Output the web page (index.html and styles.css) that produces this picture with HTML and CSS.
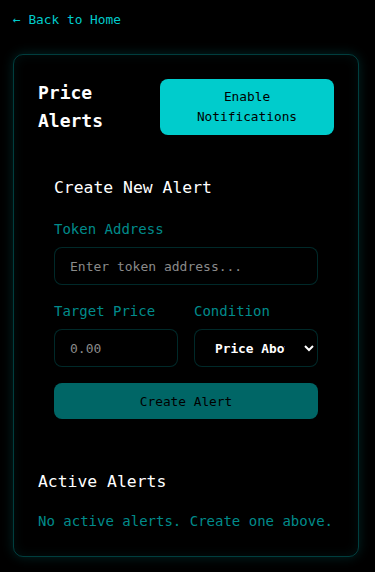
FILE: index.html
```html
<!DOCTYPE html>
<html lang="en">
<head>
<meta charset="utf-8">
<title>Price Alerts</title>
<link rel="stylesheet" href="styles.css">
</head>
<body>
<div class="page">
  <a class="back" href="#">← Back to Home</a>
  <div class="card">
    <div class="header">
      <h2 class="title">Price Alerts</h2>
      <button class="notify">Enable Notifications</button>
    </div>
    <section class="create">
      <h3 class="subtitle">Create New Alert</h3>
      <div class="group">
        <label class="label">Token Address</label>
        <input class="field" type="text" placeholder="Enter token address...">
      </div>
      <div class="row">
        <div class="group">
          <label class="label">Target Price</label>
          <input class="field" type="number" placeholder="0.00">
        </div>
        <div class="group">
          <label class="label">Condition</label>
          <select class="field select">
            <option>Price Above</option>
            <option>Price Below</option>
          </select>
        </div>
      </div>
      <button class="create-btn" disabled>Create Alert</button>
    </section>
    <h3 class="subtitle active-title">Active Alerts</h3>
    <p class="empty">No active alerts. Create one above.</p>
  </div>
</div>
</body>
</html>
```

FILE: styles.css
```css
html, body {
  margin: 0;
  padding: 0;
  background: #000;
}
body {
  font-family: "DejaVu Sans Mono", monospace;
  color: #fff;
}
.page {
  padding: 12px 16px 16px 13px;
}
.back {
  display: block;
  color: #00cccc;
  text-decoration: none;
  font-size: 12.8px;
  line-height: 16px;
  margin-bottom: 26px;
}
.card {
  border: 1px solid rgba(0, 204, 204, 0.3);
  border-radius: 10px;
  padding: 24px 24px 24px;
  box-shadow: 0 0 12px rgba(0, 204, 204, 0.18), inset 0 0 12px rgba(0, 204, 204, 0.08);
}
.header {
  display: flex;
  align-items: center;
  justify-content: space-between;
  gap: 16px;
  margin-bottom: 25px;
}
.title {
  margin: 0;
  font-size: 18px;
  line-height: 28px;
  font-weight: bold;
  flex: 1;
}
.notify {
  width: 174px;
  height: 56px;
  background: #00cccc;
  color: #000;
  border: none;
  border-radius: 8px;
  font-family: "DejaVu Sans Mono", monospace;
  font-size: 12.8px;
  line-height: 20px;
  padding: 8px 16px;
}
.create {
  padding: 16px;
}
.subtitle {
  margin: 0 0 19px;
  font-size: 16.4px;
  line-height: 24px;
  font-weight: normal;
}
.group {
  display: flex;
  flex-direction: column;
  margin-bottom: 16px;
}
.label {
  color: #008b8b;
  font-size: 14px;
  line-height: 20px;
  margin-bottom: 8px;
}
.field {
  box-sizing: border-box;
  height: 38px;
  background: #000;
  border: 1px solid rgba(0, 204, 204, 0.2);
  border-radius: 8px;
  color: #fff;
  font-family: "DejaVu Sans Mono", monospace;
  font-size: 13px;
  padding: 0 15px;
  width: 100%;
  min-width: 0;
}
.field::placeholder {
  color: #8a8a8a;
}
.select {
  padding: 0 16px 0 16px;
  font-weight: bold;
  font-size: 12.8px;
}
.row {
  display: grid;
  grid-template-columns: 1fr 1fr;
  gap: 16px;
}
.create-btn {
  display: block;
  width: 100%;
  height: 36px;
  background: #006666;
  color: #000;
  border: none;
  border-radius: 8px;
  font-family: "DejaVu Sans Mono", monospace;
  font-size: 12.8px;
}
.active-title {
  margin-top: 35px;
  margin-bottom: 16px;
}
.empty {
  margin: 0;
  color: #008b8b;
  font-size: 14px;
  line-height: 22px;
}
```
